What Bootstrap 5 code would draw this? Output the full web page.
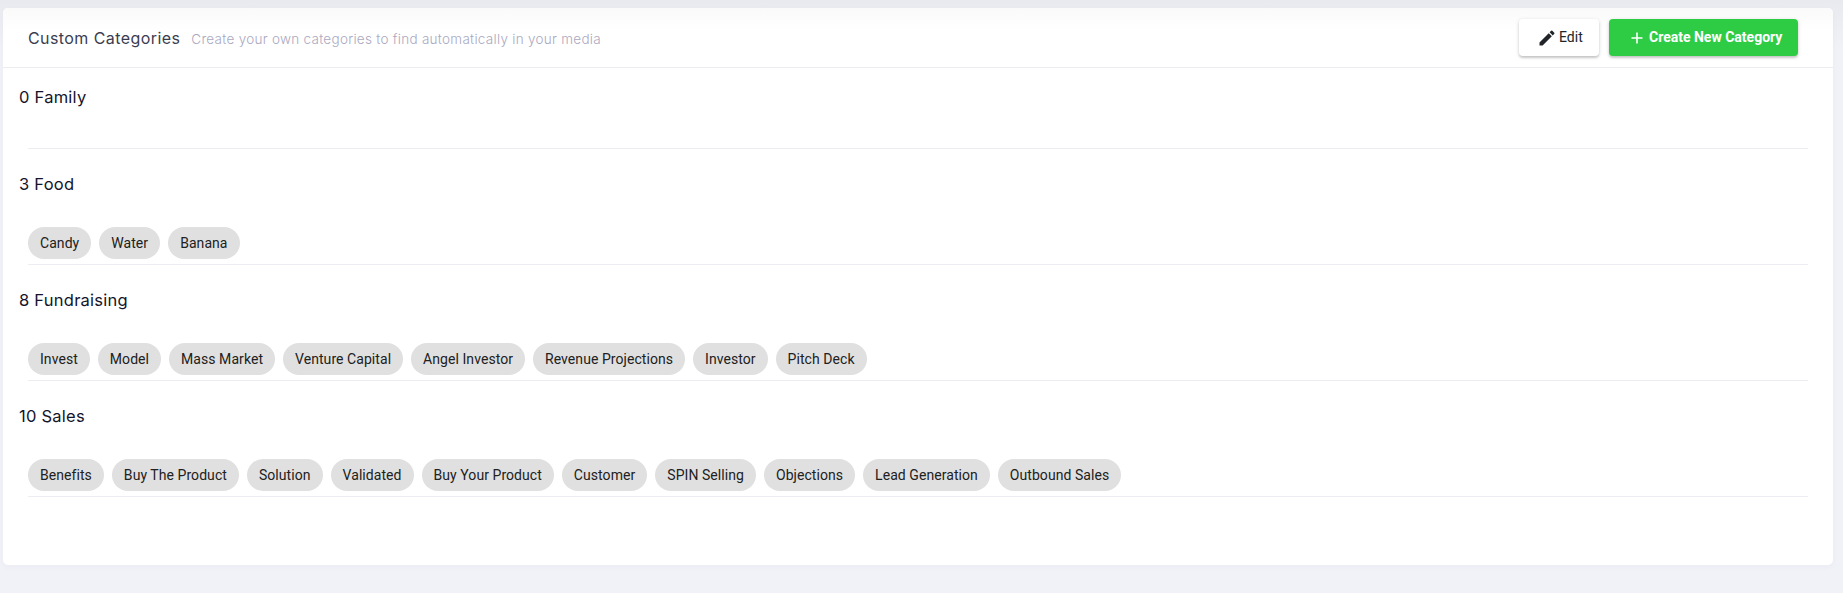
<!doctype html>
<html lang="en">
<head>
<meta charset="utf-8">
<title>Custom Categories</title>
<link href="https://cdn.jsdelivr.net/npm/bootstrap@5.3.0/dist/css/bootstrap.min.css" rel="stylesheet">
<style>
html, body { height: 100%; }
body { background: #f1f2f8; font-family: Roboto, sans-serif; overflow: hidden; position: relative; }
body::before { content: ""; position: absolute; inset: 0 0 auto 0; height: 50px; background: linear-gradient(#e9eaf0, rgba(241,242,248,0)); }
.page-wrap { padding: 8px 10px 0 3px; position: relative; }
.cat-card { height: 557px; background: #fff; border-radius: 5px; box-shadow: 0 2px 6px rgba(60,60,90,.03); }
.cat-head { height: 60px; padding: 0 35px 0 25px; border-bottom: 1px solid #ebedf2; background: linear-gradient(#fafafa, #fff 40%); border-radius: 5px 5px 0 0; }
.cat-title { font-family: Inter, sans-serif; font-size: 16px; color: #3a3d50; font-weight: 400; letter-spacing: .42px; }
.cat-sub { font-family: Inter, sans-serif; font-size: 13.5px; color: #aaa9bf; font-weight: 300; margin-left: 11px; letter-spacing: .28px; }
.act-btn { height: 37px; border: 0; border-radius: 4px; font-size: 14px; line-height: 1; display: inline-flex; align-items: center; box-shadow: 0 2px 2px rgba(0,0,0,.14), 0 1px 4px rgba(0,0,0,.14); }
.act-label { padding-bottom: 2px; }
.act-edit { width: 80px; background: #fff; color: #212529; padding: 0 0 0 18px; gap: 2px; margin-right: 10px; }
.act-new { width: 189px; background: #2ecc45; color: #fff; font-weight: 700; padding: 0 0 0 21px; gap: 5px; }
.act-new:hover { background: #2ecc45; color: #fff; }
.sect { height: 116px; padding-top: 23px; }
.sect-first { height: 81px; padding-top: 17px; }
.sect-name { font-family: Inter, sans-serif; font-size: 16.5px; font-weight: 400; color: #14142a; line-height: 24px; padding-left: 16px; margin: 0; letter-spacing: .25px; }
.sect-chips { margin: 31px 0 0 25px; width: 1780px; height: 38px; border-bottom: 1px solid #ebedf2; gap: 8px; align-items: flex-start; }
.sect-first .sect-chips { margin-top: 2px; }
.tag-chip { height: 32px; padding: 0 12px; background: #e0e0e0; border-radius: 16px; font-size: 14px; letter-spacing: .06px; line-height: 32px; color: #212121; white-space: nowrap; }
</style>
</head>
<body>
<div class="page-wrap">
  <div class="cat-card">
    <div class="cat-head d-flex align-items-center justify-content-between">
      <div class="d-flex align-items-baseline"><span class="cat-title">Custom Categories</span><span class="cat-sub">Create your own categories to find automatically in your media</span></div>
      <div class="d-flex align-items-center">
        <button class="btn act-btn act-edit" type="button"><svg width="20" height="20" viewBox="0 0 24 24" fill="currentColor" aria-hidden="true"><path d="M3 17.25V21h3.75L17.81 9.94l-3.75-3.75L3 17.25zM20.71 7.04a1 1 0 0 0 0-1.41l-2.34-2.34a1 1 0 0 0-1.41 0l-1.83 1.83 3.75 3.75 1.83-1.83z"/></svg><span class="act-label">Edit</span></button>
        <button class="btn act-btn act-new" type="button"><svg width="14" height="14" viewBox="0 0 14 14" fill="none" stroke="currentColor" stroke-width="1.6" aria-hidden="true"><path d="M7 1.5v11M1.5 7h11"/></svg><span class="act-label">Create New Category</span></button>
      </div>
    </div>
    <section class="sect sect-first"><h6 class="sect-name">0 Family</h6><div class="sect-chips d-flex"></div></section>
    <section class="sect"><h6 class="sect-name">3 Food</h6><div class="sect-chips d-flex"><span class="tag-chip">Candy</span><span class="tag-chip">Water</span><span class="tag-chip">Banana</span></div></section>
    <section class="sect"><h6 class="sect-name">8 Fundraising</h6><div class="sect-chips d-flex"><span class="tag-chip">Invest</span><span class="tag-chip">Model</span><span class="tag-chip">Mass Market</span><span class="tag-chip">Venture Capital</span><span class="tag-chip">Angel Investor</span><span class="tag-chip">Revenue Projections</span><span class="tag-chip">Investor</span><span class="tag-chip">Pitch Deck</span></div></section>
    <section class="sect"><h6 class="sect-name">10 Sales</h6><div class="sect-chips d-flex"><span class="tag-chip">Benefits</span><span class="tag-chip">Buy The Product</span><span class="tag-chip">Solution</span><span class="tag-chip">Validated</span><span class="tag-chip">Buy Your Product</span><span class="tag-chip">Customer</span><span class="tag-chip">SPIN Selling</span><span class="tag-chip">Objections</span><span class="tag-chip">Lead Generation</span><span class="tag-chip">Outbound Sales</span></div></section>
  </div>
</div>
<script src="https://cdn.jsdelivr.net/npm/bootstrap@5.3.0/dist/js/bootstrap.bundle.min.js"></script>
</body>
</html>
